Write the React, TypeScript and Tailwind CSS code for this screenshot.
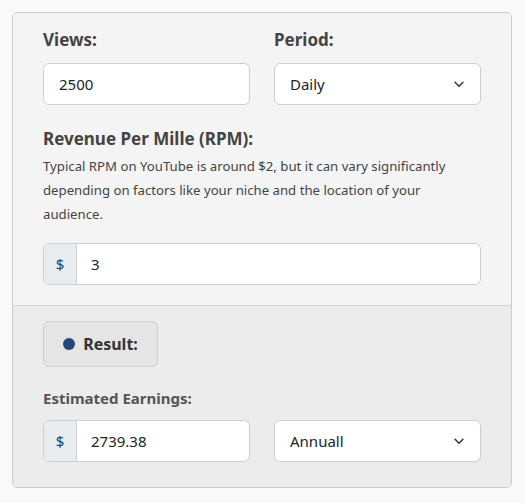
import React from "react";

function Chevron() {
  return (
    <svg width="14" height="14" viewBox="0 0 16 16" fill="none" stroke="#343a40" strokeWidth="1.8" strokeLinecap="round" strokeLinejoin="round">
      <path d="M3.5 6l4.5 4.5L12.5 6" />
    </svg>
  );
}

function Select({ value }: { value: string }) {
  return (
    <div className="flex h-[42px] items-center justify-between rounded-[6px] border border-[#cfcfcf] bg-white pl-[15px] pr-[14px] text-[15px] text-[#212529]">
      <span>{value}</span>
      <Chevron />
    </div>
  );
}

function DollarInput({ value }: { value: string }) {
  return (
    <div className="flex h-[42px] overflow-hidden rounded-[6px] border border-[#cfcfcf] bg-white">
      <div className="flex w-[33px] items-center justify-center border-r border-[#cfcfcf] bg-[#e9ecef] text-[15px] text-[#1a3f7a]">$</div>
      <div className="flex items-center pl-[14px] text-[15px] text-[#212529]">{value}</div>
    </div>
  );
}

export default function App() {
  return (
    <div className="min-h-[503px] bg-[#f9f9f9] p-[12px]" style={{ fontFamily: '"Noto Sans", "Open Sans", sans-serif' }}>
      <div className="w-[500px] overflow-hidden rounded-[5px] border border-[#cccccc]">
        <div className="bg-[#f4f4f4] px-[30px] pb-[20px] pt-[15px]">
          <div className="grid grid-cols-2 gap-[24px]">
            <div>
              <div className="text-[17px] font-bold leading-[24px] text-[#444444]">Views:</div>
              <div className="mt-[11px] flex h-[42px] items-center rounded-[6px] border border-[#cfcfcf] bg-white pl-[15px] text-[15px] text-[#212529]">2500</div>
            </div>
            <div>
              <div className="text-[17px] font-bold leading-[24px] text-[#444444]">Period:</div>
              <div className="mt-[11px]">
                <Select value="Daily" />
              </div>
            </div>
          </div>
          <div className="mt-[22px] text-[17px] font-bold leading-[24px] text-[#444444]">Revenue Per Mille (RPM):</div>
          <p className="mt-[3px] text-[13.2px] leading-[24px] text-[#444444]">
            Typical RPM on YouTube is around $2, but it can vary significantly depending on factors like your niche and the location of your audience.
          </p>
          <div className="mt-[17px]">
            <DollarInput value="3" />
          </div>
        </div>
        <div className="border-t border-[#d4d4d4] bg-[#ececec] px-[30px] pb-[25px] pt-[15px]">
          <div className="flex h-[46px] w-[115px] items-center justify-center gap-[8px] rounded-[6px] border border-[#cfcfcf] bg-[#e5e5e5]">
            <span className="h-[12px] w-[12px] rounded-full bg-[#27477a]" />
            <span className="text-[16px] font-bold text-[#333333]">Result:</span>
          </div>
          <div className="mt-[19px] text-[15px] font-bold leading-[24px] text-[#555555]">Estimated Earnings:</div>
          <div className="mt-[10px] grid grid-cols-2 gap-[24px]">
            <DollarInput value="2739.38" />
            <Select value="Annuall" />
          </div>
        </div>
      </div>
    </div>
  );
}
